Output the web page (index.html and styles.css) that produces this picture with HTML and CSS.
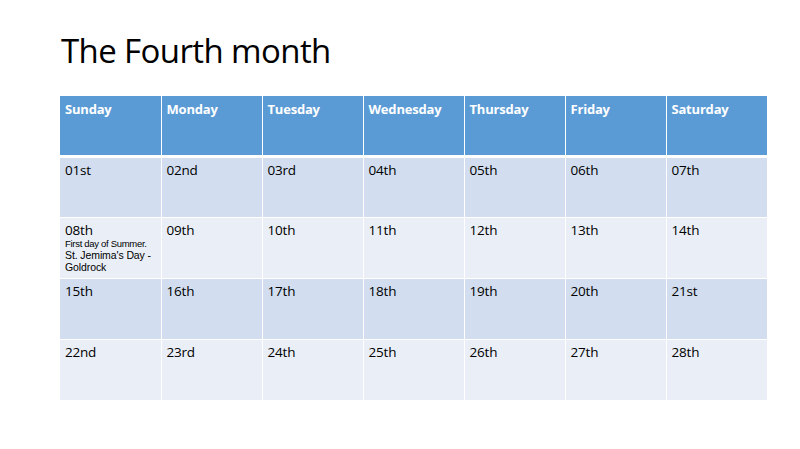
FILE: index.html
```html
<!DOCTYPE html>
<html>
<head>
<meta charset="utf-8">
<link rel="stylesheet" href="styles.css">
</head>
<body>
<div class="slide">
  <h1 class="title">The Fourth month</h1>
  <table class="cal">
    <thead>
      <tr>
        <th>Sunday</th><th>Monday</th><th>Tuesday</th><th>Wednesday</th><th>Thursday</th><th>Friday</th><th>Saturday</th>
      </tr>
    </thead>
    <tbody>
      <tr class="odd">
        <td>01st</td><td>02nd</td><td>03rd</td><td>04th</td><td>05th</td><td>06th</td><td>07th</td>
      </tr>
      <tr class="even">
        <td><div class="cell-in">08th<div class="note-small">First day of Summer.</div><div class="note">St. Jemima's Day - Goldrock</div></div></td><td>09th</td><td>10th</td><td>11th</td><td>12th</td><td>13th</td><td>14th</td>
      </tr>
      <tr class="odd">
        <td>15th</td><td>16th</td><td>17th</td><td>18th</td><td>19th</td><td>20th</td><td>21st</td>
      </tr>
      <tr class="even">
        <td>22nd</td><td>23rd</td><td>24th</td><td>25th</td><td>26th</td><td>27th</td><td>28th</td>
      </tr>
    </tbody>
  </table>
</div>
</body>
</html>
```
FILE: styles.css
```css
html, body {
  margin: 0;
  padding: 0;
  background: #ffffff;
}
.slide {
  width: 800px;
  height: 449px;
  padding: 0 0 0 60px;
  box-sizing: border-box;
  font-family: "Open Sans", "Liberation Sans", sans-serif;
}
.title {
  margin: 0;
  padding: 28px 0 0 1px;
  height: 68px;
  box-sizing: border-box;
  font-family: "Open Sans", sans-serif;
  font-weight: 400;
  font-size: 33px;
  line-height: 46px;
  color: #000;
  letter-spacing: -0.6px;
}
.cal {
  border-collapse: collapse;
  table-layout: fixed;
  width: 706px;
  margin-top: 28px;
}
.cal th, .cal td {
  border: 1px solid #fff;
  vertical-align: top;
  text-align: left;
  padding: 4px 5px;
  width: 101px;
  box-sizing: border-box;
}
.cal th {
  background: #5b9bd5;
  color: #fff;
  font-weight: 700;
  font-size: 13px;
  height: 60px;
  border-top: none;
  border-bottom: 3px solid #fff;
  letter-spacing: -0.2px;
}
.cal th:first-child, .cal td:first-child { border-left: none; }
.cal th:last-child, .cal td:last-child { border-right: none; }
.cal td {
  font-size: 13.5px;
  line-height: 17px;
  color: #000;
  height: 61px;
  padding-top: 4px;
  padding-bottom: 0;
  letter-spacing: -0.2px;
}
.cell-in {
  height: 56px;
  overflow: hidden;
}
.cal tr.odd td { background: #d2deef; }
.cal tr.even td { background: #eaeff7; }
.note-small {
  font-family: "Liberation Sans", sans-serif;
  font-size: 9.5px;
  line-height: 10px;
  letter-spacing: -0.3px;
}
.note {
  font-family: "Liberation Sans", sans-serif;
  font-size: 10.5px;
  line-height: 12px;
  letter-spacing: -0.1px;
}
```
